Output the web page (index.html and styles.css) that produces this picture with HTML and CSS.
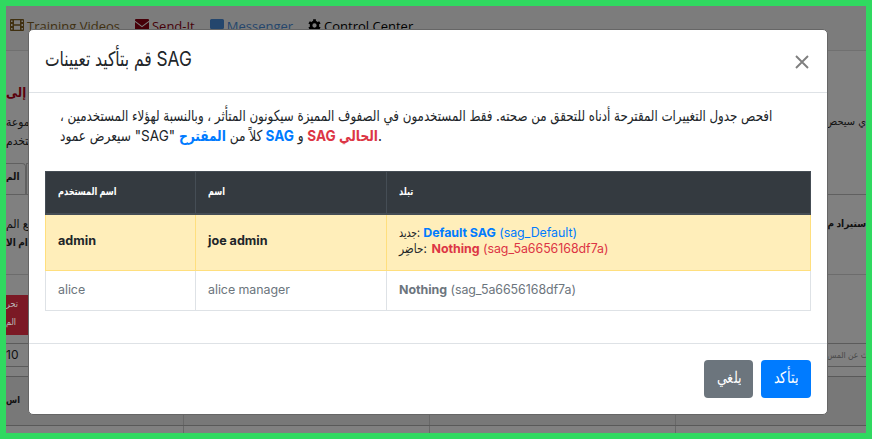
FILE: index.html
```html
<!DOCTYPE html>
<html lang="ar">
<head>
<meta charset="utf-8">
<title>SAG</title>
<link rel="stylesheet" href="styles.css">
</head>
<body>
<div class="page">
  <nav class="topnav">
    <span class="nav-item training"><svg viewBox="0 0 14 12" width="14" height="12"><path fill="currentColor" fill-rule="evenodd" d="M1 0h12q1 0 1 1v10q0 1-1 1H1q-1 0-1-1V1q0-1 1-1zM1 1.500v1.500h1.500V1.500zM1 5v2h1.500V5zM1 9v1.500h1.500V9zM4 1.300v4h6v-4zM4 6.700v4h6v-4zM11.500 1.500v1.500H13V1.500zM11.500 5v2H13V5zM11.500 9v1.500H13V9z"/></svg><span class="nav-label">Training Videos</span></span>
    <span class="nav-item sendit"><svg viewBox="0 0 14 12" width="14" height="12"><path fill="currentColor" d="M0 1q0-1 1-1h12q1 0 1 1v.7L7 7 0 1.700zM0 3l7 5.300L14 3v8q0 1-1 1H1q-1 0-1-1z"/></svg><span class="nav-label">Send-It</span></span>
    <span class="nav-item messenger"><svg viewBox="0 0 14 13" width="14" height="13"><path fill="currentColor" d="M1.500 0h11Q14 0 14 1.500v7q0 1.500-1.500 1.500H9l-4 3v-3H1.500Q0 10 0 8.500v-7Q0 0 1.500 0z"/></svg><span class="nav-label">Messenger</span></span>
    <span class="nav-item control"><svg viewBox="0 0 14 14" width="13" height="13"><circle cx="7" cy="7" r="3.700" fill="none" stroke="currentColor" stroke-width="2.800"/><path stroke="currentColor" stroke-width="3" d="M7 .3v2.500M7 11.200v2.500M1.200 3.600l2.200 1.300M10.600 9.100l2.200 1.300M1.200 10.400l2.200-1.300M10.600 4.900l2.200-1.300"/></svg><span class="nav-label">Control Center</span></span>
  </nav>
  <section class="intro">
    <div class="heading">ض إلى</div>
    <div class="row"><span>جموعة</span><span class="right">ي سيحص</span></div>
    <div class="row"><span>ستخدم</span></div>
  </section>
  <div class="tabs"><span class="tab">الم</span><span class="tab-next"></span></div>
  <section class="import">
    <div class="row"><span>يع الم</span><b class="right">ستيراد م</b></div>
    <div class="row"><b>دام الا</b></div>
  </section>
  <section class="list">
    <div class="danger"><span>تحر</span><span>الم</span></div>
    <div class="controls"><span class="count">10</span><span class="search">ث عن المس</span></div>
    <div class="grid"><b>اس</b><i></i><i></i><i></i></div>
    <div class="grid grid-body"><b></b><i></i><i></i><i></i></div>
  </section>
</div>
<div class="modal">
  <header class="modal-header">
    <h1 class="title"><span class="fit fit-title">قم بتأكيد تعيينات SAG</span></h1>
    <svg class="close" viewBox="0 0 14 14" width="14" height="14"><path d="M1 1l12 12M13 1L1 13" stroke="#7f7f7f" stroke-width="1.900"/></svg>
  </header>
  <div class="modal-body">
    <p class="lead"><span class="fit fit-first" dir="rtl">افحص جدول التغييرات المقترحة أدناه للتحقق من صحته. فقط المستخدمون في الصفوف المميزة سيكونون المتأثر ، وبالنسبة لهؤلاء المستخدمين ،</span></p>
    <p class="lead"><span class="fit fit-second">سيعرض عمود "SAG" كلاً من <b class="blue">المقترح SAG</b> و <b class="red">SAG الحالي</b>.</span></p>
    <table class="changes">
      <colgroup><col class="c1"><col class="c2"><col></colgroup>
      <thead><tr><th><span class="fit fit-head">اسم المستخدم</span></th><th><span class="fit fit-head">اسم</span></th><th><span class="fit fit-head">تبلد</span></th></tr></thead>
      <tbody>
        <tr class="changed"><td><b>admin</b></td><td><b>joe admin</b></td><td><div><span class="fit key">جديد:</span> <span class="latin blue"><b>Default SAG</b> (sag_Default)</span></div><div><span class="fit key key-current">حاضِر:</span> <span class="latin red"><b>Nothing</b> (sag_5a6656168df7a)</span></div></td></tr>
        <tr class="same"><td class="latin">alice</td><td class="latin">alice manager</td><td class="latin"><b>Nothing</b> (sag_5a6656168df7a)</td></tr>
      </tbody>
    </table>
  </div>
  <footer class="modal-footer"><button class="btn cancel"><span>يلغي</span></button><button class="btn confirm"><span>يتأكد</span></button></footer>
</div>
</body>
</html>
```
FILE: styles.css
```css
* { box-sizing: border-box; }
body { margin: 0; width: 872px; height: 439px; overflow: hidden; background: #30d960; font-family: Inter, "Liberation Sans", "DejaVu Sans Condensed", sans-serif; color: #212529; }
.page { height: 427px; width: 860px; margin: 6px; overflow: hidden; background: #808080; color: #111; font-size: 12px; }
.topnav { height: 45px; background: #7c7c7c; border-bottom: 1px solid #707070; display: flex; gap: 15px; padding: 13px 0 0 4px; font: 13px/16px "Open Sans", sans-serif; }
.nav-item { display: flex; gap: 3px; white-space: nowrap; }
.nav-label { margin-top: -1px; }
.training { color: #403010; }
.sendit { color: #460009; }
.messenger { color: #24466d; }
.control { color: #000; }
.intro { height: 112px; padding-top: 27px; }
.heading { color: #5a000b; font-weight: bold; font-size: 13px; line-height: 28px; height: 34px; width: 30px; white-space: nowrap; direction: ltr; }
.row { display: flex; justify-content: space-between; height: 19px; line-height: 19px; white-space: nowrap; }
.right { width: 39px; font-size: 11px; direction: rtl; text-align: right; }
.tabs { display: flex; height: 32px; border-bottom: 1px solid #606060; }
.tab { width: 20px; border: 1px solid #606060; border-left: 0; border-bottom: 0; border-radius: 0 4px 0 0; line-height: 25px; font-weight: bold; font-size: 10px; }
.tab-next { width: 30px; border: 1px solid #606060; border-bottom: 0; }
.import { height: 80px; border-bottom: 1px solid #6c6c6c; padding-top: 19px; }
.import b { font-size: 10px; }
.list { padding-top: 20px; }
.danger { width: 30px; height: 40px; background: #7b1925; color: #bbb; font-size: 9px; line-height: 18px; display: flex; flex-direction: column; }
.controls { height: 24px; margin-top: 8px; display: flex; justify-content: space-between; border: 1px solid #5b5b5b; border-width: 1px 0; line-height: 22px; }
.search { width: 39px; white-space: nowrap; color: #494949; font-size: 8.5px; }
.grid { height: 50px; margin-top: 9px; display: grid; grid-template-columns: 177px 246px 246px 1fr; border: 1px solid #595959; border-width: 1px 0; background: #787878; line-height: 46px; font-size: 9px; }
.grid i { border-left: 1px solid #686868; }
.grid-body { height: 8px; margin: 0; border: 0; background: #808080; }
.modal { position: absolute; left: 28px; top: 29px; width: 800px; height: 386px; background: #fff; border: 1px solid #666; border-radius: 5px; }
.modal-header { height: 63px; border-bottom: 1px solid #dee2e6; display: flex; justify-content: space-between; align-items: flex-start; padding: 16px 18px 0 16px; }
.title { margin: 0; font-size: 20px; font-weight: 400; line-height: 27px; white-space: nowrap; }
.close { margin-top: 9px; }
.modal-body { height: 251px; padding: 13px 16px 0; border-bottom: 1px solid #dee2e6; }
.fit { display: inline-block; transform-origin: left center; white-space: nowrap; }
.fit-title { transform: scaleX(.863); }
.fit-first { transform: scaleX(.879); }
.fit-second { transform: scaleX(.902); }
.fit-head { transform: scaleX(.82); }
.lead { margin: 0; padding-left: 15px; height: 20px; line-height: 20px; font-size: 15px; white-space: nowrap; }
.blue { color: #007bff; }
.red { color: #dc3545; }
.latin { font-size: 12.4px; letter-spacing: -.04px; }
.key { transform: scaleX(.82); margin-right: -5px; }
.key-current { transform: scaleX(.93); margin-right: -1px; }
.changes { width: 766px; margin-top: 25px; border-collapse: collapse; table-layout: fixed; font-size: 12.6px; line-height: 16px; }
.c1 { width: 150px; }
.c2 { width: 191px; }
th, td { padding: 0 12px 2px; text-align: left; border: 1px solid #dee2e6; }
th { height: 42px; background: #343a40; color: #fff; border-color: #454d55; font-size: 11px; border-bottom-width: 2px; }
.changed td { height: 57px; background: #ffeeba; border-color: #ffdf7e; }
.same td { height: 40px; color: #6c757d; }
.modal-footer { display: flex; justify-content: flex-end; gap: 8px; padding: 16px 16px 0; }
.btn { height: 38px; border: 0; border-radius: 4px; color: #fff; font: 16px Inter, sans-serif; padding: 0 0 4px; }
.btn span { display: inline-block; transform: scaleX(.8); }
.cancel { width: 49px; background: #6c757d; }
.confirm { width: 50px; background: #007bff; }
```
